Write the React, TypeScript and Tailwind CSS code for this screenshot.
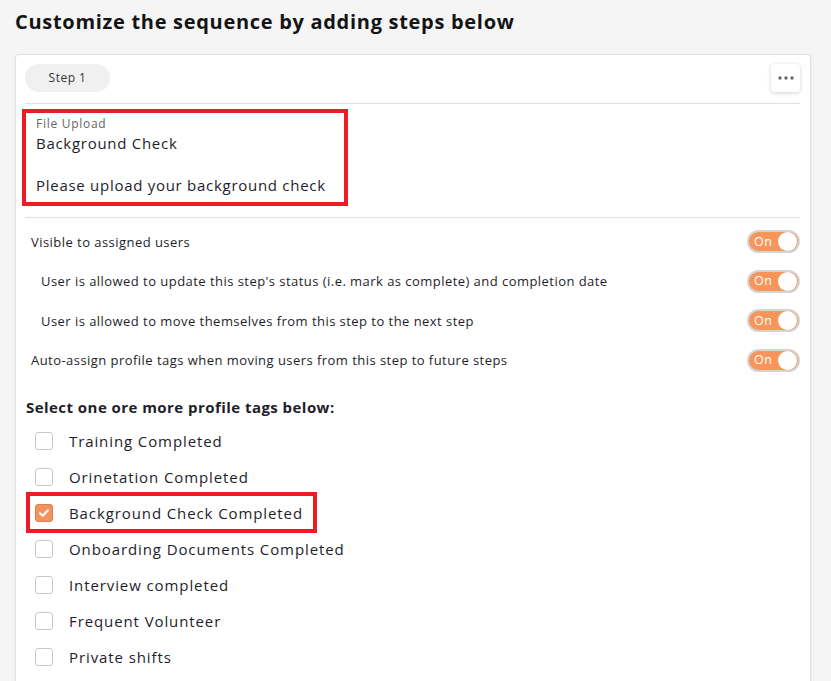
import React from "react";

const toggles = [
  { label: "Visible to assigned users", indent: false },
  { label: "User is allowed to update this step's status (i.e. mark as complete) and completion date", indent: true },
  { label: "User is allowed to move themselves from this step to the next step", indent: true },
  { label: "Auto-assign profile tags when moving users from this step to future steps", indent: false },
];

const tags = [
  { label: "Training Completed", checked: false },
  { label: "Orinetation Completed", checked: false },
  { label: "Background Check Completed", checked: true },
  { label: "Onboarding Documents Completed", checked: false },
  { label: "Interview completed", checked: false },
  { label: "Frequent Volunteer", checked: false },
  { label: "Private shifts", checked: false },
];

function Toggle() {
  return (
    <div className="flex h-[23px] w-[53px] items-center justify-between rounded-full border-2 border-[#d4d4d4] bg-[#f8955a] pl-[5px] pr-[1px]">
      <span className="pt-[1px] text-[12.5px] font-medium leading-none tracking-[0.04em] text-white">On</span>
      <span className="h-[19px] w-[19px] rounded-full bg-white" />
    </div>
  );
}

function Checkbox({ checked }: { checked: boolean }) {
  if (checked) {
    return (
      <div className="flex h-[18px] w-[18px] items-center justify-center rounded-[3px] border border-[#d9814f] bg-[#f4925d]">
        <svg width="14" height="14" viewBox="0 0 14 14" fill="none">
          <path d="M3 7.2 L5.8 9.8 L11 4.2" stroke="white" strokeWidth="2" strokeLinecap="round" strokeLinejoin="round" />
        </svg>
      </div>
    );
  }
  return <div className="h-[18px] w-[18px] rounded-[3px] border border-[#c8c8c8] bg-white" />;
}

export default function App() {
  return (
    <div
      className="min-h-[681px] w-full bg-[#f5f5f5] text-[#1e1e2a]"
      style={{ fontFamily: '"Open Sans", "Liberation Sans", sans-serif' }}
    >
      <div className="pl-[15px] pr-[20px] pt-[8px]">
        <h1 className="text-[20px] font-bold leading-[28px] tracking-[0.035em] text-[#141414]">
          Customize the sequence by adding steps below
        </h1>
        <div className="mt-[18px] rounded-[4px] border border-[#e2e2e2] bg-white pl-[9px] pr-[10px] pb-[20px] pt-[9px] shadow-[0_1px_3px_rgba(0,0,0,0.08)]">
          <div className="flex items-center justify-between">
            <div className="flex h-[28px] w-[85px] items-center justify-center rounded-full bg-[#f0f0f0] text-[12px] tracking-[0.04em] text-[#333]">
              Step 1
            </div>
            <button className="flex h-[28px] w-[29px] items-center justify-center rounded-[4px] bg-white shadow-[0_1px_4px_rgba(0,0,0,0.18)]">
              <svg width="16" height="4" viewBox="0 0 16 4">
                <circle cx="2" cy="2" r="1.7" fill="#666" />
                <circle cx="8" cy="2" r="1.7" fill="#666" />
                <circle cx="14" cy="2" r="1.7" fill="#666" />
              </svg>
            </button>
          </div>
          <div className="mt-[11px] border-t border-[#e0e0e0]" />
          <div className="mt-[5px] w-[326px] -ml-[3px] border-[4px] border-[#ec1c24] pl-[10px] pt-[3px] pb-[7px] tracking-[0.045em]">
            <div className="text-[12px] leading-[16px] text-[#666]">File Upload</div>
            <div className="mt-[1px] text-[15px] leading-[20px]">Background Check</div>
            <div className="mt-[22px] text-[15px] leading-[20px]">Please upload your background check</div>
          </div>
          <div className="mt-[11px] border-t border-[#e0e0e0]" />
          <div className="mt-[12px] flex flex-col gap-[16.5px]">
            {toggles.map((t) => (
              <div key={t.label} className="flex items-center justify-between">
                <span className={`text-[13px] leading-[20px] tracking-[0.035em] ${t.indent ? "pl-[16px]" : "pl-[6px]"}`}>{t.label}</span>
                <Toggle />
              </div>
            ))}
          </div>
          <div className="mt-[25px] pl-[1px] text-[15px] font-bold leading-[20px] tracking-[0.03em]">
            Select one ore more profile tags below:
          </div>
          <div className="mt-[6px] flex flex-col">
            {tags.map((t) => (
              <div key={t.label} className="flex h-[36px] items-center">
                <div
                  className={`flex h-[41px] items-center ${
                    t.checked ? "border-[4px] border-[#ec1c24] pr-[10px] pl-[5px] ml-[1px]" : "pl-[10px]"
                  }`}
                >
                  <Checkbox checked={t.checked} />
                  <span className="ml-[16px] text-[15px] leading-[20px] tracking-[0.06em]">{t.label}</span>
                </div>
              </div>
            ))}
          </div>
        </div>
      </div>
    </div>
  );
}
